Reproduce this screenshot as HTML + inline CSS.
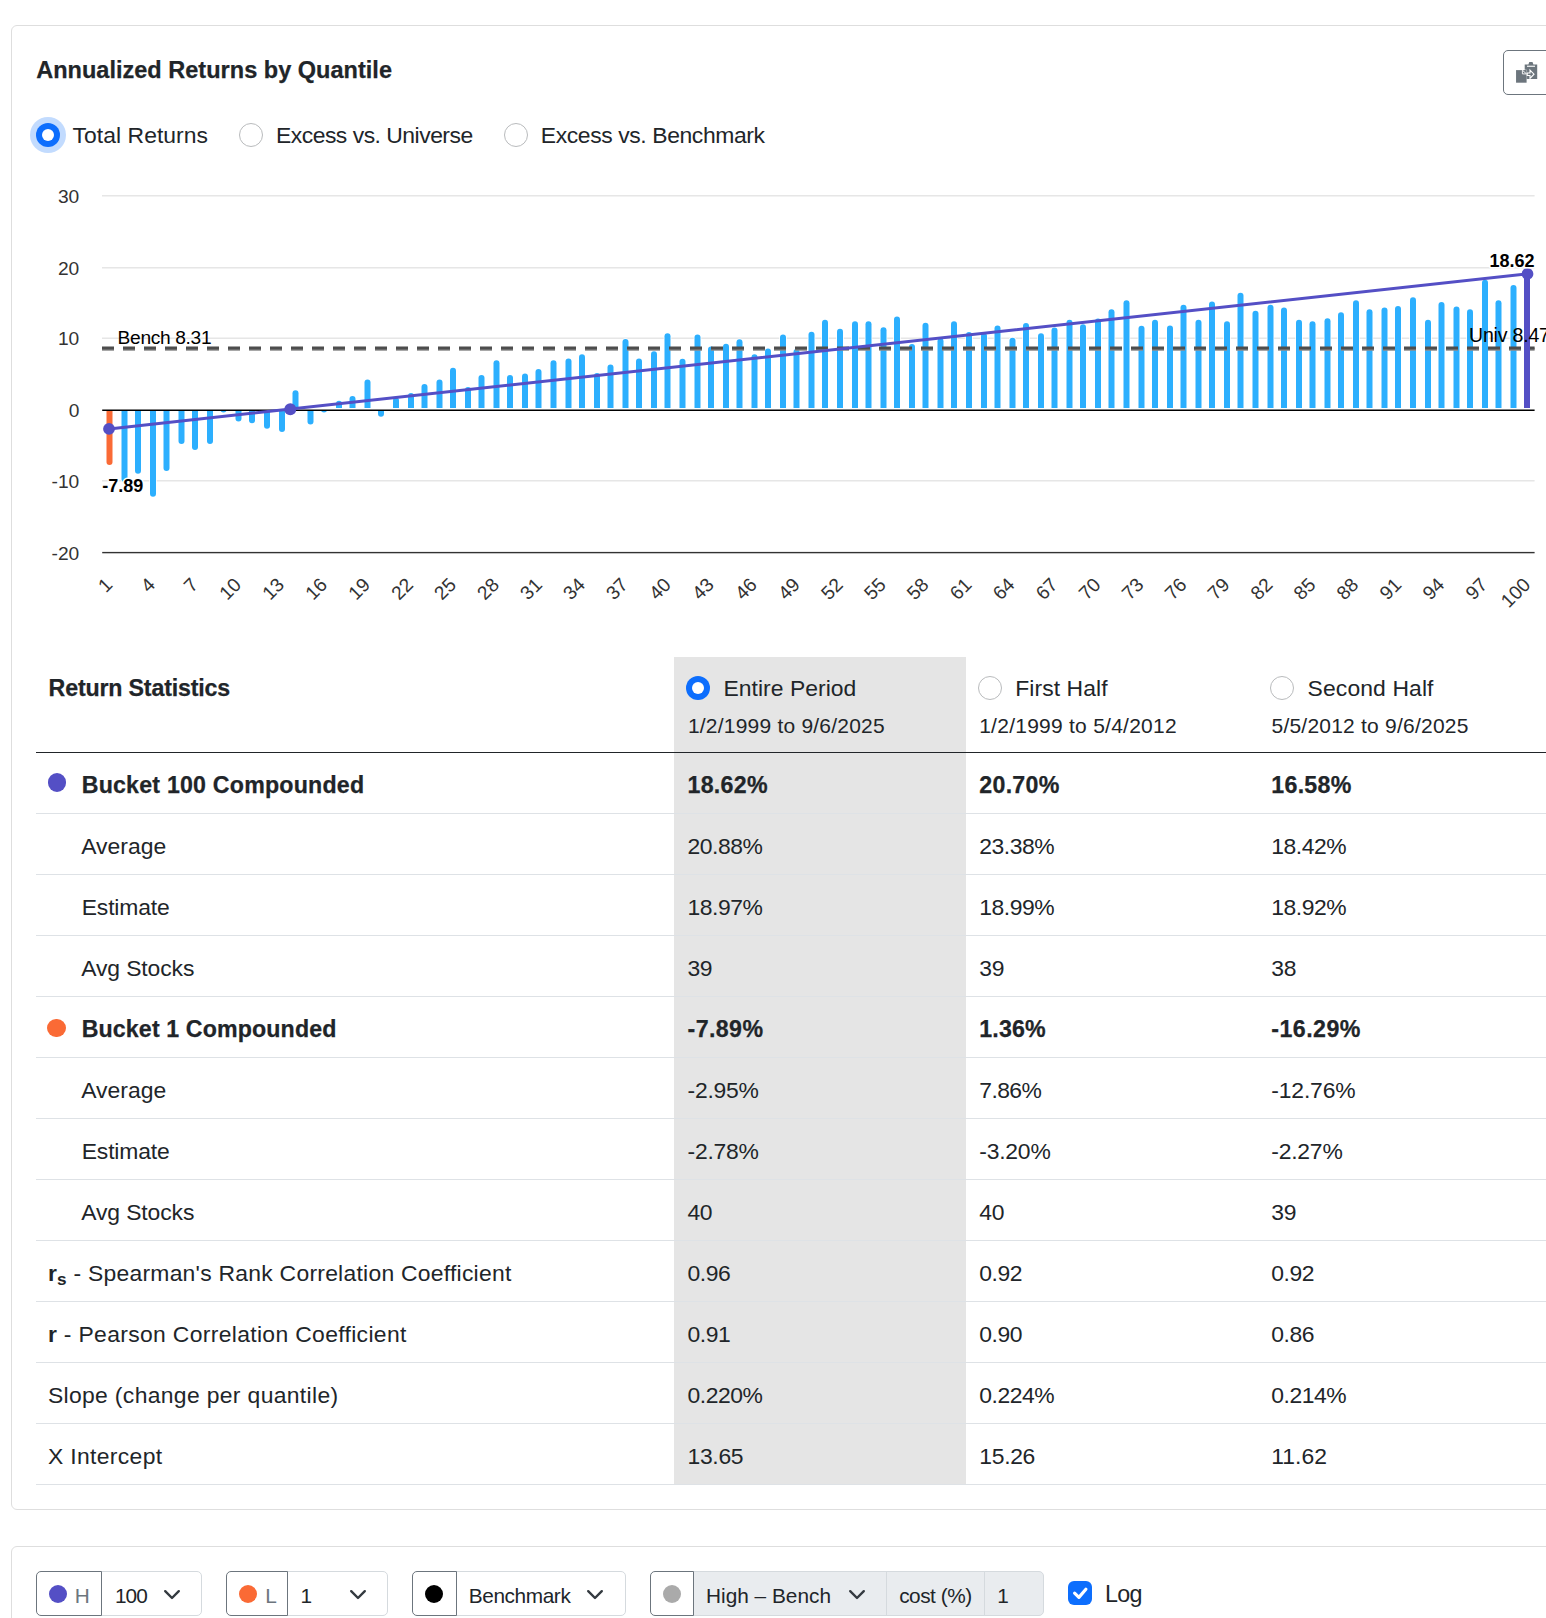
<!DOCTYPE html>
<html lang="en"><head><meta charset="utf-8"><title>Annualized Returns by Quantile</title>
<style>
html,body{margin:0;padding:0;background:#fff}
body{width:1546px;height:1618px;position:relative;overflow:hidden;font-family:'Liberation Sans', Arial, sans-serif;color:#212529}
.t{position:absolute;white-space:nowrap;line-height:30px;font-family:'Liberation Sans', Arial, sans-serif}
.t sub{font-size:.75em;line-height:0;position:relative;vertical-align:baseline;bottom:-.25em}
.card{position:absolute;border:1px solid #dedede;border-radius:6px;background:#fff;box-sizing:border-box}
.dot{position:absolute;border-radius:50%}
.radio{position:absolute;width:24px;height:24px;border-radius:50%;box-sizing:border-box;border:1px solid #b9bbbd;background:#fff}
.radio.on{border:none;background:#0d6efd}
.radio.on::after{content:"";position:absolute;left:50%;top:50%;width:12px;height:12px;margin:-6px 0 0 -6px;border-radius:50%;background:#fff}
.box{position:absolute;box-sizing:border-box;border:1px solid #d5dade;background:#fff;top:1571px;height:45px}
.box.add{border-color:#6c757d;border-radius:5px 0 0 5px}
svg text{font-family:'Liberation Sans', Arial, sans-serif}
</style></head><body>
<div class="card" style="left:11px;top:25px;width:1600px;height:1485px"></div>
<div class="card" style="left:11px;top:1546px;width:1600px;height:200px"></div>
<!-- copy button -->
<div class="box" style="left:1503px;top:50px;width:80px;height:45px;border:1px solid #6c757d;border-radius:5px"></div>
<svg style="position:absolute;left:1514px;top:60px" width="26" height="26" viewBox="0 0 26 26"><path d="M10.7 4.6H14.4L15.3 2.1H18.5L19.4 4.6H23.2V18.9H10.7Z" fill="#6c757d"/><path d="M13 5.7H21V6.8H13Z" fill="#fff"/><path d="M2.05 10.1H12.6V22.7H2.05Z" fill="#6c757d" stroke="#fff" stroke-width="0.7" style="paint-order:stroke"/><path d="M8.4 10.2V13.9H12.5Z" fill="none" stroke="#fff" stroke-width="0.9"/><path d="M13.2 13H16V10.1L20 14.2L16 18.3V15.5H13.2Z" fill="#6c757d" stroke="#fff" stroke-width="1.1" stroke-linejoin="miter"/></svg>
<!-- top radios -->
<div class="dot" style="left:29.9px;top:117px;width:36px;height:36px;background:#c2dbfe"></div>
<div class="radio on" style="left:35.9px;top:123px"></div>
<div class="radio" style="left:238.7px;top:123px"></div>
<div class="radio" style="left:504px;top:123px"></div>
<svg class="chart" width="1546" height="640" viewBox="0 0 1546 640" style="position:absolute;left:0;top:0;overflow:visible">
<rect x="102" y="195.00" width="1432.6" height="1.5" fill="#e6e6e6"/>
<rect x="102" y="267.00" width="1432.6" height="1.5" fill="#e6e6e6"/>
<rect x="102" y="337.50" width="1432.6" height="1.5" fill="#e6e6e6"/>
<rect x="102" y="480.00" width="1432.6" height="1.5" fill="#e6e6e6"/>
<g stroke="#fff" stroke-width="1.5" style="paint-order:stroke">
<path d="M106.5,410.0V462.1A3.0,3.0 0 0 0 112.5,462.1V410.0Z" fill="#fa6a35"/>
<path d="M121.5,410.0V479.0A3.0,3.0 0 0 0 127.5,479.0V410.0Z" fill="#2caffe"/>
<path d="M135.0,410.0V470.8A3.0,3.0 0 0 0 141.0,470.8V410.0Z" fill="#2caffe"/>
<path d="M150.0,410.0V493.7A3.0,3.0 0 0 0 156.0,493.7V410.0Z" fill="#2caffe"/>
<path d="M163.5,410.0V467.9A3.0,3.0 0 0 0 169.5,467.9V410.0Z" fill="#2caffe"/>
<path d="M178.5,410.0V441.1A3.0,3.0 0 0 0 184.5,441.1V410.0Z" fill="#2caffe"/>
<path d="M192.0,410.0V446.9A3.0,3.0 0 0 0 198.0,446.9V410.0Z" fill="#2caffe"/>
<path d="M207.0,410.0V441.1A3.0,3.0 0 0 0 213.0,441.1V410.0Z" fill="#2caffe"/>
<path d="M220.5,410.0V410.0A3.0,2.4 0 0 0 226.5,410.0V410.0Z" fill="#2caffe"/>
<path d="M235.5,410.0V418.6A3.0,3.0 0 0 0 241.5,418.6V410.0Z" fill="#2caffe"/>
<path d="M249.0,410.0V420.2A3.0,3.0 0 0 0 255.0,420.2V410.0Z" fill="#2caffe"/>
<path d="M264.0,410.0V425.8A3.0,3.0 0 0 0 270.0,425.8V410.0Z" fill="#2caffe"/>
<path d="M279.0,410.0V429.0A3.0,3.0 0 0 0 285.0,429.0V410.0Z" fill="#2caffe"/>
<path d="M292.5,408.0V393.2A3.0,3.0 0 0 1 298.5,393.2V408.0Z" fill="#2caffe"/>
<path d="M307.5,410.0V421.5A3.0,3.0 0 0 0 313.5,421.5V410.0Z" fill="#2caffe"/>
<path d="M321.0,410.0V410.0A3.0,2.4 0 0 0 327.0,410.0V410.0Z" fill="#2caffe"/>
<path d="M336.0,408.0V403.7A3.0,3.0 0 0 1 342.0,403.7V408.0Z" fill="#2caffe"/>
<path d="M349.5,408.0V399.0A3.0,3.0 0 0 1 355.5,399.0V408.0Z" fill="#2caffe"/>
<path d="M364.5,408.0V382.5A3.0,3.0 0 0 1 370.5,382.5V408.0Z" fill="#2caffe"/>
<path d="M378.0,410.0V413.7A3.0,3.0 0 0 0 384.0,413.7V410.0Z" fill="#2caffe"/>
<path d="M393.0,408.0V400.4A3.0,3.0 0 0 1 399.0,400.4V408.0Z" fill="#2caffe"/>
<path d="M408.0,408.0V396.1A3.0,3.0 0 0 1 414.0,396.1V408.0Z" fill="#2caffe"/>
<path d="M421.5,408.0V387.0A3.0,3.0 0 0 1 427.5,387.0V408.0Z" fill="#2caffe"/>
<path d="M436.5,408.0V382.5A3.0,3.0 0 0 1 442.5,382.5V408.0Z" fill="#2caffe"/>
<path d="M450.0,408.0V370.7A3.0,3.0 0 0 1 456.0,370.7V408.0Z" fill="#2caffe"/>
<path d="M465.0,408.0V390.0A3.0,3.0 0 0 1 471.0,390.0V408.0Z" fill="#2caffe"/>
<path d="M478.5,408.0V378.1A3.0,3.0 0 0 1 484.5,378.1V408.0Z" fill="#2caffe"/>
<path d="M493.5,408.0V363.2A3.0,3.0 0 0 1 499.5,363.2V408.0Z" fill="#2caffe"/>
<path d="M507.0,408.0V378.1A3.0,3.0 0 0 1 513.0,378.1V408.0Z" fill="#2caffe"/>
<path d="M522.0,408.0V376.5A3.0,3.0 0 0 1 528.0,376.5V408.0Z" fill="#2caffe"/>
<path d="M535.5,408.0V372.0A3.0,3.0 0 0 1 541.5,372.0V408.0Z" fill="#2caffe"/>
<path d="M550.5,408.0V363.2A3.0,3.0 0 0 1 556.5,363.2V408.0Z" fill="#2caffe"/>
<path d="M565.5,408.0V361.6A3.0,3.0 0 0 1 571.5,361.6V408.0Z" fill="#2caffe"/>
<path d="M579.0,408.0V357.2A3.0,3.0 0 0 1 585.0,357.2V408.0Z" fill="#2caffe"/>
<path d="M594.0,408.0V376.0A3.0,3.0 0 0 1 600.0,376.0V408.0Z" fill="#2caffe"/>
<path d="M607.5,408.0V367.5A3.0,3.0 0 0 1 613.5,367.5V408.0Z" fill="#2caffe"/>
<path d="M622.5,408.0V342.0A3.0,3.0 0 0 1 628.5,342.0V408.0Z" fill="#2caffe"/>
<path d="M636.0,408.0V361.6A3.0,3.0 0 0 1 642.0,361.6V408.0Z" fill="#2caffe"/>
<path d="M651.0,408.0V354.3A3.0,3.0 0 0 1 657.0,354.3V408.0Z" fill="#2caffe"/>
<path d="M664.5,408.0V336.2A3.0,3.0 0 0 1 670.5,336.2V408.0Z" fill="#2caffe"/>
<path d="M679.5,408.0V361.7A3.0,3.0 0 0 1 685.5,361.7V408.0Z" fill="#2caffe"/>
<path d="M694.5,408.0V337.6A3.0,3.0 0 0 1 700.5,337.6V408.0Z" fill="#2caffe"/>
<path d="M708.0,408.0V349.5A3.0,3.0 0 0 1 714.0,349.5V408.0Z" fill="#2caffe"/>
<path d="M723.0,408.0V346.8A3.0,3.0 0 0 1 729.0,346.8V408.0Z" fill="#2caffe"/>
<path d="M736.5,408.0V342.3A3.0,3.0 0 0 1 742.5,342.3V408.0Z" fill="#2caffe"/>
<path d="M751.5,408.0V357.2A3.0,3.0 0 0 1 757.5,357.2V408.0Z" fill="#2caffe"/>
<path d="M765.0,408.0V351.5A3.0,3.0 0 0 1 771.0,351.5V408.0Z" fill="#2caffe"/>
<path d="M780.0,408.0V337.5A3.0,3.0 0 0 1 786.0,337.5V408.0Z" fill="#2caffe"/>
<path d="M793.5,408.0V351.9A3.0,3.0 0 0 1 799.5,351.9V408.0Z" fill="#2caffe"/>
<path d="M808.5,408.0V334.7A3.0,3.0 0 0 1 814.5,334.7V408.0Z" fill="#2caffe"/>
<path d="M822.0,408.0V322.7A3.0,3.0 0 0 1 828.0,322.7V408.0Z" fill="#2caffe"/>
<path d="M837.0,408.0V331.8A3.0,3.0 0 0 1 843.0,331.8V408.0Z" fill="#2caffe"/>
<path d="M852.0,408.0V324.3A3.0,3.0 0 0 1 858.0,324.3V408.0Z" fill="#2caffe"/>
<path d="M865.5,408.0V324.3A3.0,3.0 0 0 1 871.5,324.3V408.0Z" fill="#2caffe"/>
<path d="M880.5,408.0V330.2A3.0,3.0 0 0 1 886.5,330.2V408.0Z" fill="#2caffe"/>
<path d="M894.0,408.0V319.5A3.0,3.0 0 0 1 900.0,319.5V408.0Z" fill="#2caffe"/>
<path d="M909.0,408.0V347.1A3.0,3.0 0 0 1 915.0,347.1V408.0Z" fill="#2caffe"/>
<path d="M922.5,408.0V325.7A3.0,3.0 0 0 1 928.5,325.7V408.0Z" fill="#2caffe"/>
<path d="M937.5,408.0V341.2A3.0,3.0 0 0 1 943.5,341.2V408.0Z" fill="#2caffe"/>
<path d="M951.0,408.0V324.3A3.0,3.0 0 0 1 957.0,324.3V408.0Z" fill="#2caffe"/>
<path d="M966.0,408.0V335.1A3.0,3.0 0 0 1 972.0,335.1V408.0Z" fill="#2caffe"/>
<path d="M981.0,408.0V336.0A3.0,3.0 0 0 1 987.0,336.0V408.0Z" fill="#2caffe"/>
<path d="M994.5,408.0V328.6A3.0,3.0 0 0 1 1000.5,328.6V408.0Z" fill="#2caffe"/>
<path d="M1009.5,408.0V340.7A3.0,3.0 0 0 1 1015.5,340.7V408.0Z" fill="#2caffe"/>
<path d="M1023.0,408.0V325.9A3.0,3.0 0 0 1 1029.0,325.9V408.0Z" fill="#2caffe"/>
<path d="M1038.0,408.0V336.3A3.0,3.0 0 0 1 1044.0,336.3V408.0Z" fill="#2caffe"/>
<path d="M1051.5,408.0V330.6A3.0,3.0 0 0 1 1057.5,330.6V408.0Z" fill="#2caffe"/>
<path d="M1066.5,408.0V322.7A3.0,3.0 0 0 1 1072.5,322.7V408.0Z" fill="#2caffe"/>
<path d="M1080.0,408.0V327.3A3.0,3.0 0 0 1 1086.0,327.3V408.0Z" fill="#2caffe"/>
<path d="M1095.0,408.0V321.4A3.0,3.0 0 0 1 1101.0,321.4V408.0Z" fill="#2caffe"/>
<path d="M1108.5,408.0V312.2A3.0,3.0 0 0 1 1114.5,312.2V408.0Z" fill="#2caffe"/>
<path d="M1123.5,408.0V303.2A3.0,3.0 0 0 1 1129.5,303.2V408.0Z" fill="#2caffe"/>
<path d="M1138.5,408.0V328.8A3.0,3.0 0 0 1 1144.5,328.8V408.0Z" fill="#2caffe"/>
<path d="M1152.0,408.0V322.7A3.0,3.0 0 0 1 1158.0,322.7V408.0Z" fill="#2caffe"/>
<path d="M1167.0,408.0V328.6A3.0,3.0 0 0 1 1173.0,328.6V408.0Z" fill="#2caffe"/>
<path d="M1180.5,408.0V307.7A3.0,3.0 0 0 1 1186.5,307.7V408.0Z" fill="#2caffe"/>
<path d="M1195.5,408.0V322.7A3.0,3.0 0 0 1 1201.5,322.7V408.0Z" fill="#2caffe"/>
<path d="M1209.0,408.0V304.5A3.0,3.0 0 0 1 1215.0,304.5V408.0Z" fill="#2caffe"/>
<path d="M1224.0,408.0V324.3A3.0,3.0 0 0 1 1230.0,324.3V408.0Z" fill="#2caffe"/>
<path d="M1237.5,408.0V295.7A3.0,3.0 0 0 1 1243.5,295.7V408.0Z" fill="#2caffe"/>
<path d="M1252.5,408.0V313.7A3.0,3.0 0 0 1 1258.5,313.7V408.0Z" fill="#2caffe"/>
<path d="M1267.5,408.0V307.7A3.0,3.0 0 0 1 1273.5,307.7V408.0Z" fill="#2caffe"/>
<path d="M1281.0,408.0V310.6A3.0,3.0 0 0 1 1287.0,310.6V408.0Z" fill="#2caffe"/>
<path d="M1296.0,408.0V322.7A3.0,3.0 0 0 1 1302.0,322.7V408.0Z" fill="#2caffe"/>
<path d="M1309.5,408.0V324.3A3.0,3.0 0 0 1 1315.5,324.3V408.0Z" fill="#2caffe"/>
<path d="M1324.5,408.0V321.2A3.0,3.0 0 0 1 1330.5,321.2V408.0Z" fill="#2caffe"/>
<path d="M1338.0,408.0V315.3A3.0,3.0 0 0 1 1344.0,315.3V408.0Z" fill="#2caffe"/>
<path d="M1353.0,408.0V303.3A3.0,3.0 0 0 1 1359.0,303.3V408.0Z" fill="#2caffe"/>
<path d="M1366.5,408.0V312.2A3.0,3.0 0 0 1 1372.5,312.2V408.0Z" fill="#2caffe"/>
<path d="M1381.5,408.0V310.6A3.0,3.0 0 0 1 1387.5,310.6V408.0Z" fill="#2caffe"/>
<path d="M1395.0,408.0V309.0A3.0,3.0 0 0 1 1401.0,309.0V408.0Z" fill="#2caffe"/>
<path d="M1410.0,408.0V300.2A3.0,3.0 0 0 1 1416.0,300.2V408.0Z" fill="#2caffe"/>
<path d="M1425.0,408.0V322.7A3.0,3.0 0 0 1 1431.0,322.7V408.0Z" fill="#2caffe"/>
<path d="M1438.5,408.0V304.9A3.0,3.0 0 0 1 1444.5,304.9V408.0Z" fill="#2caffe"/>
<path d="M1453.5,408.0V309.4A3.0,3.0 0 0 1 1459.5,309.4V408.0Z" fill="#2caffe"/>
<path d="M1467.0,408.0V312.2A3.0,3.0 0 0 1 1473.0,312.2V408.0Z" fill="#2caffe"/>
<path d="M1482.0,408.0V282.8A3.0,3.0 0 0 1 1488.0,282.8V408.0Z" fill="#2caffe"/>
<path d="M1495.5,408.0V303.2A3.0,3.0 0 0 1 1501.5,303.2V408.0Z" fill="#2caffe"/>
<path d="M1510.5,408.0V288.1A3.0,3.0 0 0 1 1516.5,288.1V408.0Z" fill="#2caffe"/>
<path d="M1524.0,408.0V275.0A3.0,3.0 0 0 1 1530.0,275.0V408.0Z" fill="#544fc5"/>
</g>
<rect x="102.2" y="551.9" width="1432.4" height="1.4" fill="#333"/>
<rect x="102.2" y="409.5" width="1432.4" height="1.5" fill="#000"/>
<path d="M102,349.3H1534.6" stroke="#8c8c8c" stroke-width="3" stroke-dasharray="12 9" fill="none"/>
<path d="M102,348.1H1534.6" stroke="#4d4d4d" stroke-width="3" stroke-dasharray="12 9" fill="none"/>
<path d="M109.0,428.9L1527.5,273.9" stroke="#544fc5" stroke-width="3" fill="none" stroke-linecap="round"/>
<circle cx="109.0" cy="428.9" r="5.9" fill="#544fc5"/>
<circle cx="290.3" cy="409.3" r="6" fill="#544fc5"/>
<circle cx="1527.5" cy="273.9" r="5.9" fill="#544fc5"/>
<text x="79.3" y="202.8" text-anchor="end" font-size="19.2" fill="#333">30</text>
<text x="79.3" y="274.7" text-anchor="end" font-size="19.2" fill="#333">20</text>
<text x="79.3" y="344.8" text-anchor="end" font-size="19.2" fill="#333">10</text>
<text x="79.3" y="416.8" text-anchor="end" font-size="19.2" fill="#333">0</text>
<text x="79.3" y="487.8" text-anchor="end" font-size="19.2" fill="#333">-10</text>
<text x="79.3" y="559.8" text-anchor="end" font-size="19.2" fill="#333">-20</text>
<text transform="translate(113.5,586) rotate(-45)" text-anchor="end" font-size="19.2" fill="#333">1</text>
<text transform="translate(156.4,586) rotate(-45)" text-anchor="end" font-size="19.2" fill="#333">4</text>
<text transform="translate(199.4,586) rotate(-45)" text-anchor="end" font-size="19.2" fill="#333">7</text>
<text transform="translate(242.4,586) rotate(-45)" text-anchor="end" font-size="19.2" fill="#333">10</text>
<text transform="translate(285.4,586) rotate(-45)" text-anchor="end" font-size="19.2" fill="#333">13</text>
<text transform="translate(328.3,586) rotate(-45)" text-anchor="end" font-size="19.2" fill="#333">16</text>
<text transform="translate(371.3,586) rotate(-45)" text-anchor="end" font-size="19.2" fill="#333">19</text>
<text transform="translate(414.3,586) rotate(-45)" text-anchor="end" font-size="19.2" fill="#333">22</text>
<text transform="translate(457.2,586) rotate(-45)" text-anchor="end" font-size="19.2" fill="#333">25</text>
<text transform="translate(500.2,586) rotate(-45)" text-anchor="end" font-size="19.2" fill="#333">28</text>
<text transform="translate(543.2,586) rotate(-45)" text-anchor="end" font-size="19.2" fill="#333">31</text>
<text transform="translate(586.2,586) rotate(-45)" text-anchor="end" font-size="19.2" fill="#333">34</text>
<text transform="translate(629.1,586) rotate(-45)" text-anchor="end" font-size="19.2" fill="#333">37</text>
<text transform="translate(672.1,586) rotate(-45)" text-anchor="end" font-size="19.2" fill="#333">40</text>
<text transform="translate(715.1,586) rotate(-45)" text-anchor="end" font-size="19.2" fill="#333">43</text>
<text transform="translate(758.0,586) rotate(-45)" text-anchor="end" font-size="19.2" fill="#333">46</text>
<text transform="translate(801.0,586) rotate(-45)" text-anchor="end" font-size="19.2" fill="#333">49</text>
<text transform="translate(844.0,586) rotate(-45)" text-anchor="end" font-size="19.2" fill="#333">52</text>
<text transform="translate(887.0,586) rotate(-45)" text-anchor="end" font-size="19.2" fill="#333">55</text>
<text transform="translate(929.9,586) rotate(-45)" text-anchor="end" font-size="19.2" fill="#333">58</text>
<text transform="translate(972.9,586) rotate(-45)" text-anchor="end" font-size="19.2" fill="#333">61</text>
<text transform="translate(1015.9,586) rotate(-45)" text-anchor="end" font-size="19.2" fill="#333">64</text>
<text transform="translate(1058.8,586) rotate(-45)" text-anchor="end" font-size="19.2" fill="#333">67</text>
<text transform="translate(1101.8,586) rotate(-45)" text-anchor="end" font-size="19.2" fill="#333">70</text>
<text transform="translate(1144.8,586) rotate(-45)" text-anchor="end" font-size="19.2" fill="#333">73</text>
<text transform="translate(1187.8,586) rotate(-45)" text-anchor="end" font-size="19.2" fill="#333">76</text>
<text transform="translate(1230.7,586) rotate(-45)" text-anchor="end" font-size="19.2" fill="#333">79</text>
<text transform="translate(1273.7,586) rotate(-45)" text-anchor="end" font-size="19.2" fill="#333">82</text>
<text transform="translate(1316.7,586) rotate(-45)" text-anchor="end" font-size="19.2" fill="#333">85</text>
<text transform="translate(1359.6,586) rotate(-45)" text-anchor="end" font-size="19.2" fill="#333">88</text>
<text transform="translate(1402.6,586) rotate(-45)" text-anchor="end" font-size="19.2" fill="#333">91</text>
<text transform="translate(1445.6,586) rotate(-45)" text-anchor="end" font-size="19.2" fill="#333">94</text>
<text transform="translate(1488.6,586) rotate(-45)" text-anchor="end" font-size="19.2" fill="#333">97</text>
<text transform="translate(1531.5,586) rotate(-45)" text-anchor="end" font-size="19.2" fill="#333">100</text>
<text x="117.6" y="343.8" font-size="19.2" fill="#000" textLength="94" lengthAdjust="spacing">Bench 8.31</text>
<text x="1469.1" y="341.8" font-size="19.5" letter-spacing="-0.2" fill="#000">Univ 8.47</text>
<text x="102.2" y="492.2" font-size="18" font-weight="700" fill="#000" stroke="#fff" stroke-width="3" style="paint-order:stroke" stroke-linejoin="round">-7.89</text>
<text x="1534.6" y="267" text-anchor="end" font-size="18" font-weight="700" fill="#000" stroke="#fff" stroke-width="3" style="paint-order:stroke" stroke-linejoin="round">18.62</text>
</svg>
<div style="position:absolute;left:674px;top:657px;width:292px;height:827px;background:#e5e5e5"></div>
<div style="position:absolute;left:36px;top:752px;width:1520px;height:1px;background:#212529"></div>
<div style="position:absolute;left:36px;top:813px;width:1520px;height:1px;background:#dee2e6"></div>
<div style="position:absolute;left:36px;top:874px;width:1520px;height:1px;background:#dee2e6"></div>
<div style="position:absolute;left:36px;top:935px;width:1520px;height:1px;background:#dee2e6"></div>
<div style="position:absolute;left:36px;top:996px;width:1520px;height:1px;background:#dee2e6"></div>
<div style="position:absolute;left:36px;top:1057px;width:1520px;height:1px;background:#dee2e6"></div>
<div style="position:absolute;left:36px;top:1118px;width:1520px;height:1px;background:#dee2e6"></div>
<div style="position:absolute;left:36px;top:1179px;width:1520px;height:1px;background:#dee2e6"></div>
<div style="position:absolute;left:36px;top:1240px;width:1520px;height:1px;background:#dee2e6"></div>
<div style="position:absolute;left:36px;top:1301px;width:1520px;height:1px;background:#dee2e6"></div>
<div style="position:absolute;left:36px;top:1362px;width:1520px;height:1px;background:#dee2e6"></div>
<div style="position:absolute;left:36px;top:1423px;width:1520px;height:1px;background:#dee2e6"></div>
<div style="position:absolute;left:36px;top:1484px;width:1520px;height:1px;background:#dee2e6"></div>
<div class="radio on" style="left:685.9px;top:675.8px"></div>
<div class="radio" style="left:977.8px;top:675.8px"></div>
<div class="radio" style="left:1269.8px;top:675.8px"></div>
<div class="dot" style="left:47.7px;top:773.4px;width:18.4px;height:18.4px;background:#544fc5"></div>
<div class="dot" style="left:47.3px;top:1018.7px;width:18.4px;height:18.4px;background:#fa6a35"></div>
<!-- bottom controls -->
<div class="box" style="left:100px;width:102px;border-radius:0 5px 5px 0"></div>
<div class="box add" style="left:36px;width:66px"></div>
<div class="dot" style="left:48.9px;top:1584.8px;width:18.3px;height:18.3px;background:#544fc5"></div>
<svg style="position:absolute;left:163px;top:1588.7px" width="18" height="11" viewBox="0 0 18 11"><path d="M2.2 2.2L9 9L15.8 2.2" fill="none" stroke="#343a40" stroke-width="2.4" stroke-linecap="round" stroke-linejoin="round"/></svg>
<div class="box" style="left:286px;width:102px;border-radius:0 5px 5px 0"></div>
<div class="box add" style="left:226px;width:62px"></div>
<div class="dot" style="left:238.5px;top:1584.8px;width:18.3px;height:18.3px;background:#fa6a35"></div>
<svg style="position:absolute;left:349.2px;top:1588.7px" width="18" height="11" viewBox="0 0 18 11"><path d="M2.2 2.2L9 9L15.8 2.2" fill="none" stroke="#343a40" stroke-width="2.4" stroke-linecap="round" stroke-linejoin="round"/></svg>
<div class="box" style="left:454px;width:172px;border-radius:0 5px 5px 0"></div>
<div class="box add" style="left:412px;width:44.6px"></div>
<div class="dot" style="left:424.5px;top:1584.8px;width:18.3px;height:18.3px;background:#000"></div>
<svg style="position:absolute;left:586.4px;top:1588.7px" width="18" height="11" viewBox="0 0 18 11"><path d="M2.2 2.2L9 9L15.8 2.2" fill="none" stroke="#343a40" stroke-width="2.4" stroke-linecap="round" stroke-linejoin="round"/></svg>
<div class="box" style="left:692px;width:195px;background:#e9ecef"></div>
<div class="box" style="left:886px;width:99px;background:#e9ecef"></div>
<div class="box" style="left:984px;width:60px;background:#e9ecef;border-radius:0 5px 5px 0"></div>
<div class="box add" style="left:650px;width:44.4px"></div>
<div class="dot" style="left:662.9px;top:1584.8px;width:18.3px;height:18.3px;background:#aaa"></div>
<svg style="position:absolute;left:847.5px;top:1588.7px" width="18" height="11" viewBox="0 0 18 11"><path d="M2.2 2.2L9 9L15.8 2.2" fill="none" stroke="#343a40" stroke-width="2.4" stroke-linecap="round" stroke-linejoin="round"/></svg>
<div style="position:absolute;left:1068px;top:1581px;width:24px;height:24px;border-radius:6px;background:#0d6efd"></div>
<svg style="position:absolute;left:1068px;top:1581px" width="24" height="24" viewBox="0 0 24 24"><path d="M6.6 12.2L10.9 16.4L17.9 8.3" fill="none" stroke="#fff" stroke-width="3.2" stroke-linecap="round" stroke-linejoin="round"/></svg>
<span class="t" style="left:36.2px;top:54.5px;font-size:23.5px;letter-spacing:0.021px;font-weight:700;-webkit-text-stroke:0.25px currentColor;">Annualized Returns by Quantile</span>
<span class="t" style="left:72.5px;top:120.2px;font-size:22.9px;letter-spacing:0.056px;">Total Returns</span>
<span class="t" style="left:276.0px;top:120.2px;font-size:22.9px;letter-spacing:-0.494px;">Excess vs. Universe</span>
<span class="t" style="left:540.8px;top:120.2px;font-size:22.9px;letter-spacing:-0.387px;">Excess vs. Benchmark</span>
<span class="t" style="left:48.6px;top:673.4px;font-size:23.2px;letter-spacing:-0.169px;font-weight:700;-webkit-text-stroke:0.25px currentColor;">Return Statistics</span>
<span class="t" style="left:723.5px;top:672.7px;font-size:22.9px;letter-spacing:0.044px;">Entire Period</span>
<span class="t" style="left:1015.3px;top:672.7px;font-size:22.9px;letter-spacing:0.072px;">First Half</span>
<span class="t" style="left:1307.6px;top:672.7px;font-size:22.9px;letter-spacing:0.118px;">Second Half</span>
<span class="t" style="left:687.9px;top:710.7px;font-size:21.0px;letter-spacing:0.216px;">1/2/1999 to 9/6/2025</span>
<span class="t" style="left:979.2px;top:710.7px;font-size:21.0px;letter-spacing:0.251px;">1/2/1999 to 5/4/2012</span>
<span class="t" style="left:1271.5px;top:710.7px;font-size:21.0px;letter-spacing:0.221px;">5/5/2012 to 9/6/2025</span>
<span class="t" style="left:81.7px;top:769.5px;font-size:23.2px;letter-spacing:0.205px;font-weight:700;-webkit-text-stroke:0.25px currentColor;">Bucket 100 Compounded</span>
<span class="t" style="left:687.5px;top:769.5px;font-size:23.2px;letter-spacing:0.274px;font-weight:700;-webkit-text-stroke:0.25px currentColor;">18.62%</span>
<span class="t" style="left:979.3px;top:769.5px;font-size:23.2px;letter-spacing:0.274px;font-weight:700;-webkit-text-stroke:0.25px currentColor;">20.70%</span>
<span class="t" style="left:1271.3px;top:769.5px;font-size:23.2px;letter-spacing:0.274px;font-weight:700;-webkit-text-stroke:0.25px currentColor;">16.58%</span>
<span class="t" style="left:81.2px;top:830.6px;font-size:22.9px;letter-spacing:0.034px;">Average</span>
<span class="t" style="left:687.5px;top:830.6px;font-size:22.9px;letter-spacing:-0.480px;">20.88%</span>
<span class="t" style="left:979.3px;top:830.6px;font-size:22.9px;letter-spacing:-0.480px;">23.38%</span>
<span class="t" style="left:1271.3px;top:830.6px;font-size:22.9px;letter-spacing:-0.480px;">18.42%</span>
<span class="t" style="left:81.7px;top:891.6px;font-size:22.9px;letter-spacing:-0.133px;">Estimate</span>
<span class="t" style="left:687.5px;top:891.6px;font-size:22.9px;letter-spacing:-0.480px;">18.97%</span>
<span class="t" style="left:979.3px;top:891.6px;font-size:22.9px;letter-spacing:-0.480px;">18.99%</span>
<span class="t" style="left:1271.3px;top:891.6px;font-size:22.9px;letter-spacing:-0.480px;">18.92%</span>
<span class="t" style="left:81.2px;top:952.6px;font-size:22.9px;letter-spacing:-0.099px;">Avg Stocks</span>
<span class="t" style="left:687.5px;top:952.6px;font-size:22.9px;letter-spacing:-0.394px;">39</span>
<span class="t" style="left:979.3px;top:952.6px;font-size:22.9px;letter-spacing:-0.394px;">39</span>
<span class="t" style="left:1271.3px;top:952.6px;font-size:22.9px;letter-spacing:-0.394px;">38</span>
<span class="t" style="left:81.7px;top:1013.5px;font-size:23.2px;letter-spacing:0.120px;font-weight:700;-webkit-text-stroke:0.25px currentColor;">Bucket 1 Compounded</span>
<span class="t" style="left:687.5px;top:1013.5px;font-size:23.2px;letter-spacing:0.405px;font-weight:700;-webkit-text-stroke:0.25px currentColor;">-7.89%</span>
<span class="t" style="left:979.3px;top:1013.5px;font-size:23.2px;letter-spacing:0.170px;font-weight:700;-webkit-text-stroke:0.25px currentColor;">1.36%</span>
<span class="t" style="left:1271.3px;top:1013.5px;font-size:23.2px;letter-spacing:0.461px;font-weight:700;-webkit-text-stroke:0.25px currentColor;">-16.29%</span>
<span class="t" style="left:81.2px;top:1074.6px;font-size:22.9px;letter-spacing:0.034px;">Average</span>
<span class="t" style="left:687.5px;top:1074.6px;font-size:22.9px;letter-spacing:-0.219px;">-2.95%</span>
<span class="t" style="left:979.3px;top:1074.6px;font-size:22.9px;letter-spacing:-0.617px;">7.86%</span>
<span class="t" style="left:1271.3px;top:1074.6px;font-size:22.9px;letter-spacing:-0.158px;">-12.76%</span>
<span class="t" style="left:81.7px;top:1135.6px;font-size:22.9px;letter-spacing:-0.133px;">Estimate</span>
<span class="t" style="left:687.5px;top:1135.6px;font-size:22.9px;letter-spacing:-0.219px;">-2.78%</span>
<span class="t" style="left:979.3px;top:1135.6px;font-size:22.9px;letter-spacing:-0.219px;">-3.20%</span>
<span class="t" style="left:1271.3px;top:1135.6px;font-size:22.9px;letter-spacing:-0.219px;">-2.27%</span>
<span class="t" style="left:81.2px;top:1196.6px;font-size:22.9px;letter-spacing:-0.099px;">Avg Stocks</span>
<span class="t" style="left:687.5px;top:1196.6px;font-size:22.9px;letter-spacing:-0.394px;">40</span>
<span class="t" style="left:979.3px;top:1196.6px;font-size:22.9px;letter-spacing:-0.394px;">40</span>
<span class="t" style="left:1271.3px;top:1196.6px;font-size:22.9px;letter-spacing:-0.394px;">39</span>
<span class="t" style="left:47.9px;top:1257.6px;font-size:22.9px;letter-spacing:0.254px;"><b>r<sub>s</sub></b> - Spearman's Rank Correlation Coefficient</span>
<span class="t" style="left:687.5px;top:1257.6px;font-size:22.9px;letter-spacing:-0.436px;">0.96</span>
<span class="t" style="left:979.3px;top:1257.6px;font-size:22.9px;letter-spacing:-0.436px;">0.92</span>
<span class="t" style="left:1271.3px;top:1257.6px;font-size:22.9px;letter-spacing:-0.436px;">0.92</span>
<span class="t" style="left:47.9px;top:1318.6px;font-size:22.9px;letter-spacing:0.338px;"><b>r</b> - Pearson Correlation Coefficient</span>
<span class="t" style="left:687.5px;top:1318.6px;font-size:22.9px;letter-spacing:-0.436px;">0.91</span>
<span class="t" style="left:979.3px;top:1318.6px;font-size:22.9px;letter-spacing:-0.436px;">0.90</span>
<span class="t" style="left:1271.3px;top:1318.6px;font-size:22.9px;letter-spacing:-0.436px;">0.86</span>
<span class="t" style="left:47.9px;top:1379.6px;font-size:22.9px;letter-spacing:0.346px;">Slope (change per quantile)</span>
<span class="t" style="left:687.5px;top:1379.6px;font-size:22.9px;letter-spacing:-0.480px;">0.220%</span>
<span class="t" style="left:979.3px;top:1379.6px;font-size:22.9px;letter-spacing:-0.480px;">0.224%</span>
<span class="t" style="left:1271.3px;top:1379.6px;font-size:22.9px;letter-spacing:-0.480px;">0.214%</span>
<span class="t" style="left:47.9px;top:1440.6px;font-size:22.9px;letter-spacing:0.354px;">X Intercept</span>
<span class="t" style="left:687.5px;top:1440.6px;font-size:22.9px;letter-spacing:-0.307px;">13.65</span>
<span class="t" style="left:979.3px;top:1440.6px;font-size:22.9px;letter-spacing:-0.307px;">15.26</span>
<span class="t" style="left:1271.3px;top:1440.6px;font-size:22.9px;letter-spacing:0.033px;">11.62</span>
<span class="t" style="left:74.7px;top:1580.7px;font-size:20.8px;letter-spacing:-3.231px;color:#6c757d;">H</span>
<span class="t" style="left:114.9px;top:1580.7px;font-size:20.8px;letter-spacing:-0.934px;">100</span>
<span class="t" style="left:265.2px;top:1580.7px;font-size:20.8px;letter-spacing:-3.278px;color:#6c757d;">L</span>
<span class="t" style="left:300.5px;top:1580.7px;font-size:20.8px;letter-spacing:-0.350px;">1</span>
<span class="t" style="left:468.8px;top:1580.7px;font-size:20.8px;letter-spacing:-0.399px;">Benchmark</span>
<span class="t" style="left:706.0px;top:1580.7px;font-size:20.8px;letter-spacing:0.010px;">High – Bench</span>
<span class="t" style="left:899.2px;top:1580.7px;font-size:20.8px;letter-spacing:-0.483px;">cost (%)</span>
<span class="t" style="left:997.3px;top:1580.7px;font-size:20.8px;letter-spacing:-0.350px;">1</span>
<span class="t" style="left:1104.9px;top:1578.8px;font-size:23.3px;letter-spacing:-0.658px;">Log</span>
</body></html>
